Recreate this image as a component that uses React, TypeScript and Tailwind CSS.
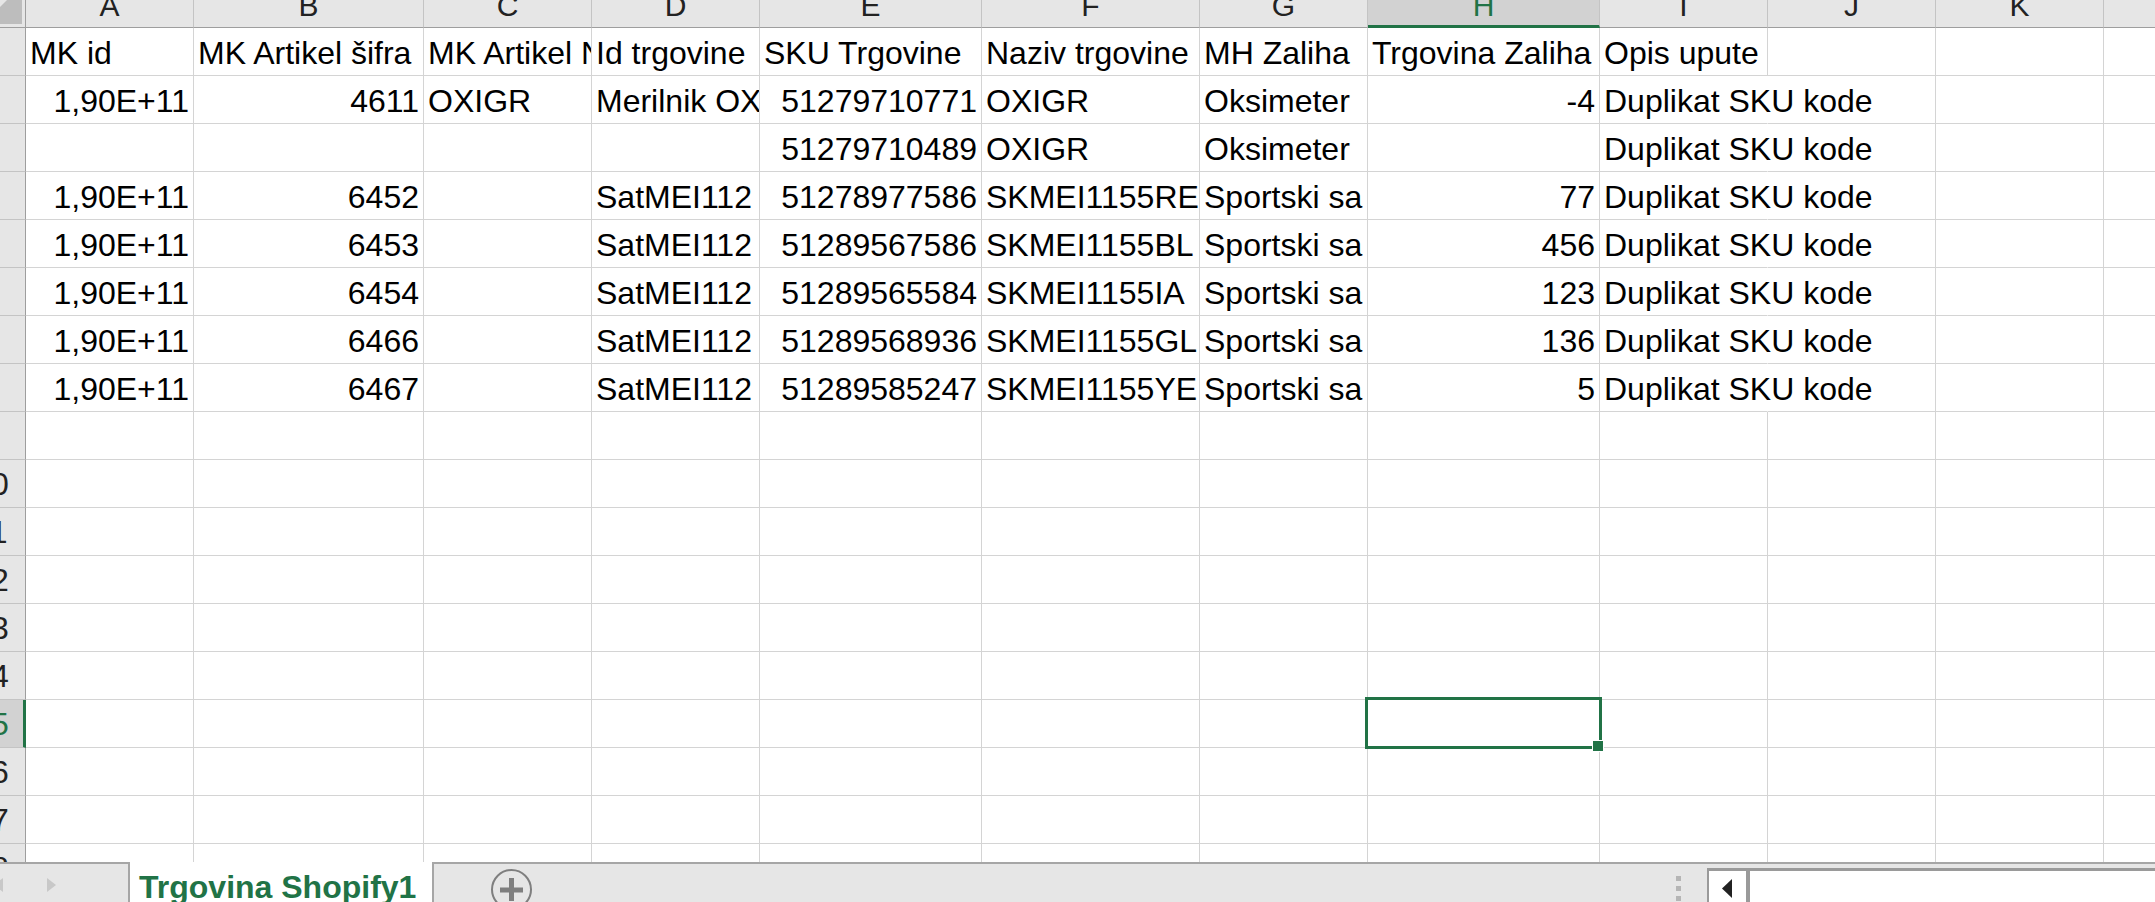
import React from 'react';

type Cell = { t: string; r?: boolean; spill?: boolean } | null;

const COLS = [
  { id: 'A', w: 'w-[168px]' },
  { id: 'B', w: 'w-[230px]' },
  { id: 'C', w: 'w-[168px]' },
  { id: 'D', w: 'w-[168px]' },
  { id: 'E', w: 'w-[222px]' },
  { id: 'F', w: 'w-[218px]' },
  { id: 'G', w: 'w-[168px]' },
  { id: 'H', w: 'w-[232px]' },
  { id: 'I', w: 'w-[168px]' },
  { id: 'J', w: 'w-[168px]' },
  { id: 'K', w: 'w-[168px]' },
];

const L = (t: string): Cell => ({ t });
const R = (t: string): Cell => ({ t, r: true });
const S = (t: string): Cell => ({ t, spill: true });
const _ = null;

const DATA: Cell[][] = [
  [L('MK id'), L('MK Artikel šifra'), L('MK Artikel Naziv'), L('Id trgovine'), L('SKU Trgovine'), L('Naziv trgovine'), L('MH Zaliha'), L('Trgovina Zaliha'), L('Opis upute'), _, _],
  [R('1,90E+11'), R('4611'), L('OXIGR'), L('Merilnik OXIGR'), R('51279710771'), L('OXIGR'), L('Oksimeter'), R('-4'), S('Duplikat SKU kode'), _, _],
  [_, _, _, _, R('51279710489'), L('OXIGR'), L('Oksimeter'), _, S('Duplikat SKU kode'), _, _],
  [R('1,90E+11'), R('6452'), _, L('SatMEI112'), R('51278977586'), L('SKMEI1155RE'), L('Sportski sa'), R('77'), S('Duplikat SKU kode'), _, _],
  [R('1,90E+11'), R('6453'), _, L('SatMEI112'), R('51289567586'), L('SKMEI1155BL'), L('Sportski sa'), R('456'), S('Duplikat SKU kode'), _, _],
  [R('1,90E+11'), R('6454'), _, L('SatMEI112'), R('51289565584'), L('SKMEI1155IA'), L('Sportski sa'), R('123'), S('Duplikat SKU kode'), _, _],
  [R('1,90E+11'), R('6466'), _, L('SatMEI112'), R('51289568936'), L('SKMEI1155GL'), L('Sportski sa'), R('136'), S('Duplikat SKU kode'), _, _],
  [R('1,90E+11'), R('6467'), _, L('SatMEI112'), R('51289585247'), L('SKMEI1155YE'), L('Sportski sa'), R('5'), S('Duplikat SKU kode'), _, _],
];

const ROW_COUNT = 18;
const ACTIVE_ROW = 15;
const ACTIVE_COL = 'H';

function ColumnHeader() {
  return (
    <div className="flex h-[28px] shrink-0">
      <div className="w-[26px] shrink-0 bg-[#e6e6e6] border-r border-r-[#9e9e9e] border-b border-b-[#9e9e9e]">
        <svg width="22" height="24" viewBox="0 0 22 24">
          <polygon points="0,7 7,0 22,0 22,24 0,24" fill="#bdbdbd" />
        </svg>
      </div>
      {COLS.map((c) => {
        const active = c.id === ACTIVE_COL;
        return (
          <div
            key={c.id}
            className={`${c.w} shrink-0 border-r border-r-[#c4c4c4] overflow-hidden flex justify-center ${
              active
                ? 'bg-[#d2d2d2] border-b-[3px] border-b-[#217346] text-[#217346]'
                : 'bg-[#e6e6e6] border-b border-b-[#9e9e9e] text-[#222]'
            }`}
          >
            <div className="-mt-[9px] text-[30px] leading-[30px]">{c.id}</div>
          </div>
        );
      })}
      <div className="flex-1 bg-[#e6e6e6] border-b border-b-[#9e9e9e]" />
    </div>
  );
}

function RowHead({ n, active }: { n: number; active: boolean }) {
  // header is wider than what is visible: only the right part shows
  return (
    <div
      className={`w-[26px] shrink-0 border-b border-b-[#c4c4c4] overflow-hidden flex items-center ${
        active
          ? 'bg-[#d2d2d2] border-r-[3px] border-r-[#217346] text-[#217346]'
          : 'bg-[#e6e6e6] border-r border-r-[#9e9e9e] text-[#222]'
      }`}
    >
      <div className="w-[66px] shrink-0 -ml-[42px] text-center text-[32px] leading-[32px]">{n}</div>
    </div>
  );
}

function GridCell({ w, cell, selected }: { w: string; cell: Cell; selected: boolean }) {
  const spill = !!cell?.spill;
  return (
    <div
      className={`${w} shrink-0 relative border-b border-b-[#d4d4d4] border-r flex items-end pb-[6px] px-[4px] whitespace-nowrap text-[32px] leading-[32px] ${
        spill ? 'border-r-transparent' : 'border-r-[#d4d4d4]'
      } ${selected || spill ? '' : 'overflow-hidden'} ${cell?.r ? 'justify-end' : 'justify-start'}`}
    >
      {cell?.t}
      {selected && (
        <>
          <div className="absolute -left-[3px] -top-[3px] w-[237px] h-[52px] border-[3px] border-[#217346] z-10" />
          <div className="absolute left-[224px] top-[40px] w-[12px] h-[12px] bg-[#217346] border border-white z-20" />
        </>
      )}
    </div>
  );
}

function SheetBar() {
  return (
    <div className="h-[40px] shrink-0 flex bg-[#e6e6e6] overflow-hidden">
      <div className="w-[128px] shrink-0 border-t-2 border-[#a6a6a6] overflow-hidden">
        <svg width="60" height="38" viewBox="0 0 60 38">
          <polygon points="3,14 -6,21 3,28" fill="#c8c8c8" />
          <polygon points="47,14 56,21 47,28" fill="#c8c8c8" />
        </svg>
      </div>
      <div className="w-[306px] shrink-0 bg-white border-x-2 border-[#a6a6a6] pl-[9px] pt-[9px] whitespace-nowrap">
        <span className="text-[32px] leading-[32px] font-bold text-[#217346]">Trgovina Shopify1</span>
      </div>
      <div className="flex-1 border-t-2 border-[#a6a6a6] flex items-start">
        <svg className="ml-[57px] mt-[5px] shrink-0" width="42" height="42" viewBox="0 0 42 42">
          <circle cx="20.5" cy="20.5" r="19.5" fill="none" stroke="#7f7f7f" strokeWidth="2" />
          <line x1="9" y1="21" x2="32" y2="21" stroke="#7f7f7f" strokeWidth="5" />
          <line x1="20.5" y1="9" x2="20.5" y2="32" stroke="#7f7f7f" strokeWidth="5" />
        </svg>
        <div className="ml-auto mr-[26px] mt-[12px] flex flex-col gap-[5px]">
          <div className="w-[5px] h-[5px] bg-[#b5b5b5]" />
          <div className="w-[5px] h-[5px] bg-[#b5b5b5]" />
          <div className="w-[5px] h-[5px] bg-[#b5b5b5]" />
        </div>
        <div className="w-[448px] shrink-0 mt-[4px] self-stretch border-t-[3px] border-l-2 border-[#9a9a9a] bg-white flex">
          <div className="w-[37px] shrink-0">
            <svg className="ml-[13px] mt-[8px]" width="10" height="19" viewBox="0 0 10 19">
              <polygon points="10,0 0,9.5 10,19" fill="#222" />
            </svg>
          </div>
          <div className="w-[4px] shrink-0 bg-[#9a9a9a]" />
          <div className="flex-1" />
        </div>
      </div>
    </div>
  );
}

export default function App() {
  const rows = Array.from({ length: ROW_COUNT }, (_, i) => DATA[i] ?? COLS.map(() => null));
  return (
    <div className="w-[2155px] h-[902px] overflow-hidden flex flex-col bg-white text-black font-['Liberation_Sans',Arial,sans-serif]">
      <div className="flex-1 overflow-hidden flex flex-col">
        <ColumnHeader />
        {rows.map((row, ri) => {
          const n = ri + 1;
          return (
            <div key={n} className="flex h-[48px] shrink-0">
              <RowHead n={n} active={n === ACTIVE_ROW} />
              {COLS.map((c, ci) => (
                <GridCell
                  key={c.id}
                  w={c.w}
                  cell={row[ci]}
                  selected={n === ACTIVE_ROW && c.id === ACTIVE_COL}
                />
              ))}
              <div className="flex-1 border-b border-b-[#d4d4d4]" />
            </div>
          );
        })}
      </div>
      <SheetBar />
    </div>
  );
}
